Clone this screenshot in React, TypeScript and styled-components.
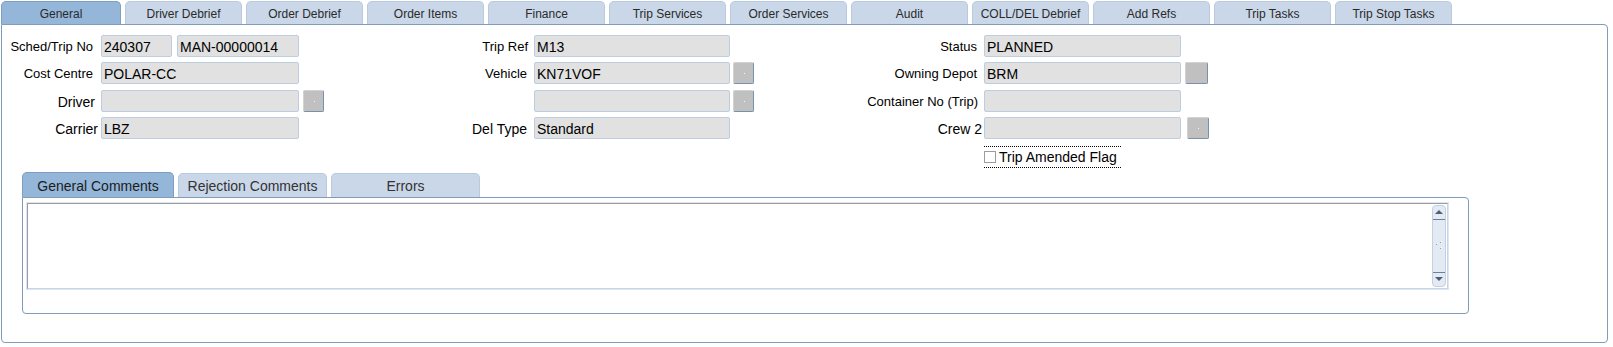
import React from "react";
import styled, { createGlobalStyle } from "styled-components";

const GlobalStyle = createGlobalStyle`
  html, body {
    margin: 0;
    padding: 0;
    background: #fff;
  }
  body {
    font-family: "Liberation Sans", Arial, sans-serif;
    color: #000;
  }
`;

const Page = styled.div`
  width: 1613px;
  box-sizing: border-box;
  padding: 1px 5px 0 1px;
`;

const TabBar = styled.div`
  display: flex;
  align-items: flex-end;
  gap: 4px;
  height: 23px;
`;

const MainTab = styled.div<{ $active?: boolean; $w: number }>`
  box-sizing: border-box;
  width: ${(p) => p.$w}px;
  height: 23px;
  display: flex;
  align-items: center;
  justify-content: center;
  padding-top: 1px;
  font-size: 12px;
  color: #2a2a2a;
  background: ${(p) => (p.$active ? "#93b6d9" : "#c9d7e9")};
  border: 1px solid ${(p) => (p.$active ? "#7f9fc2" : "#b9cadf")};
  border-bottom: none;
  border-radius: 5px 5px 0 0;
`;

const Panel = styled.div`
  box-sizing: border-box;
  height: 319px;
  border: 1px solid #7f9db9;
  border-radius: 0 4px 4px 4px;
  background: #fff;
`;

const Form = styled.div`
  display: grid;
  grid-template-columns: 99px 224px 209px 221px 229px 226px;
  grid-auto-rows: 22px;
  row-gap: 5.4px;
  padding-top: 10px;
`;

const Label = styled.div<{ $pad?: number; $big?: boolean }>`
  display: flex;
  align-items: center;
  justify-content: flex-end;
  padding-right: ${(p) => p.$pad ?? 6}px;
  padding-top: ${(p) => (p.$big ? 2 : 1)}px;
  font-size: ${(p) => (p.$big ? 14 : 13)}px;
  white-space: nowrap;
`;

const Cell = styled.div<{ $gap?: number }>`
  display: flex;
  align-items: center;
  gap: ${(p) => p.$gap ?? 4}px;
`;

const Field = styled.div<{ $w: number }>`
  box-sizing: border-box;
  width: ${(p) => p.$w}px;
  height: 22px;
  padding: 3px 0 0 2px;
  line-height: 17px;
  font-size: 14px;
  background: #e1e1e1;
  border: 1px solid #bccde2;
  border-radius: 2px;
  white-space: nowrap;
  overflow: hidden;
`;

const LovButton = styled.div<{ $w?: number; $dot?: boolean }>`
  box-sizing: border-box;
  position: relative;
  width: ${(p) => p.$w ?? 21}px;
  height: 22px;
  background: #c0c0c0;
  border: 1px solid;
  border-color: #d2d2d2 #7891ad #7891ad #d2d2d2;
  border-radius: 2px;
  &::after {
    content: "";
    display: ${(p) => (p.$dot ? "block" : "none")};
    position: absolute;
    left: 50%;
    top: 50%;
    width: 1px;
    height: 1px;
    background: #f4f4f4;
  }
`;

const CheckRow = styled.div`
  grid-column: 6;
  box-sizing: border-box;
  display: flex;
  align-items: center;
  gap: 3px;
  width: 137px;
  height: 22px;
  margin-top: 1px;
  border-top: 1px dotted #000;
  border-bottom: 1px dotted #000;
  font-size: 14px;
  white-space: nowrap;
`;

const CheckBox = styled.span`
  box-sizing: border-box;
  width: 12px;
  height: 12px;
  border: 1px solid #9c9c9c;
  background: #fff;
`;

const Comments = styled.div`
  width: 1447px;
  margin: 5px 0 0 20px;
`;

const SubTabBar = styled.div`
  display: flex;
  align-items: flex-end;
  gap: 4px;
  height: 25px;
`;

const SubTab = styled.div<{ $active?: boolean; $w: number }>`
  box-sizing: border-box;
  width: ${(p) => p.$w}px;
  height: ${(p) => (p.$active ? 25 : 24)}px;
  display: flex;
  align-items: center;
  justify-content: center;
  padding-top: 2px;
  font-size: 14px;
  color: ${(p) => (p.$active ? "#1c1c1c" : "#333")};
  background: ${(p) => (p.$active ? "#93b6d9" : "#c9d7e9")};
  border: 1px solid ${(p) => (p.$active ? "#7f9fc2" : "#b9cadf")};
  border-bottom: none;
  border-radius: 5px 5px 0 0;
`;

const SubPanel = styled.div`
  box-sizing: border-box;
  height: 117px;
  padding: 5px 0 0 4px;
  border: 1px solid #7f9db9;
  border-radius: 0 4px 4px 4px;
`;

const TextBox = styled.div`
  box-sizing: border-box;
  display: flex;
  width: 1421px;
  height: 86px;
  background: #fff;
  border: 1px solid;
  border-color: #9d9d9d #c8d5e6 #c8d5e6 #9d9d9d;
  box-shadow: 0 0 0 1px #dde6f0;
`;

const ScrollBar = styled.div`
  box-sizing: border-box;
  display: flex;
  flex-direction: column;
  width: 14px;
  margin: 1px 1px 1px auto;
  background: #e4eaf3;
  border: 1px solid #c2d0e2;
  border-radius: 4px;
`;

const ScrollEnd = styled.div<{ $down?: boolean }>`
  display: flex;
  align-items: center;
  justify-content: center;
  height: 13px;
  ${(p) =>
    p.$down ? "border-top: 1px solid #6f8199;" : "border-bottom: 1px solid #6f8199;"}
`;

const Arrow = styled.span<{ $down?: boolean }>`
  width: 0;
  height: 0;
  border-left: 4px solid transparent;
  border-right: 4px solid transparent;
  ${(p) =>
    p.$down ? "border-top: 4px solid #4f5e73;" : "border-bottom: 4px solid #4f5e73;"}
`;

const ScrollTrack = styled.div`
  flex: 1;
  display: flex;
  align-items: center;
  justify-content: center;
`;

const Grip = () => (
  <svg width="8" height="10" viewBox="0 0 8 10">
    <rect x="5" y="1" width="1" height="1" fill="#8ea3bd" />
    <rect x="6" y="0" width="1" height="1" fill="#fff" />
    <rect x="1" y="3" width="1" height="1" fill="#8ea3bd" />
    <rect x="2" y="2" width="1" height="1" fill="#fff" />
    <rect x="5" y="7" width="1" height="1" fill="#8ea3bd" />
    <rect x="6" y="6" width="1" height="1" fill="#fff" />
  </svg>
);

const mainTabs = [
  "General",
  "Driver Debrief",
  "Order Debrief",
  "Order Items",
  "Finance",
  "Trip Services",
  "Order Services",
  "Audit",
  "COLL/DEL Debrief",
  "Add Refs",
  "Trip Tasks",
  "Trip Stop Tasks",
];

export default function App() {
  return (
    <>
      <GlobalStyle />
      <Page>
        <TabBar>
          {mainTabs.map((t, i) => (
            <MainTab key={t} $active={i === 0} $w={i === 0 ? 120 : 117}>
              {t}
            </MainTab>
          ))}
        </TabBar>
        <Panel>
          <Form>
            <Label $pad={8}>Sched/Trip No</Label>
            <Cell $gap={5}>
              <Field $w={71}>240307</Field>
              <Field $w={122}>MAN-00000014</Field>
            </Cell>
            <Label $pad={6}>Trip Ref</Label>
            <Cell>
              <Field $w={196}>M13</Field>
            </Cell>
            <Label $pad={7}>Status</Label>
            <Cell>
              <Field $w={197}>PLANNED</Field>
            </Cell>

            <Label $pad={8}>Cost Centre</Label>
            <Cell>
              <Field $w={198}>POLAR-CC</Field>
            </Cell>
            <Label $pad={7}>Vehicle</Label>
            <Cell $gap={3}>
              <Field $w={196}>KN71VOF</Field>
              <LovButton $dot />
            </Cell>
            <Label $pad={7}>Owning Depot</Label>
            <Cell $gap={4}>
              <Field $w={197}>BRM</Field>
              <LovButton $w={23} />
            </Cell>

            <Label $pad={6} $big>
              Driver
            </Label>
            <Cell $gap={4}>
              <Field $w={198} />
              <LovButton $dot />
            </Cell>
            <Label />
            <Cell $gap={3}>
              <Field $w={196} />
              <LovButton $dot />
            </Cell>
            <Label $pad={6}>Container No (Trip)</Label>
            <Cell>
              <Field $w={197} />
            </Cell>

            <Label $pad={3} $big>
              Carrier
            </Label>
            <Cell>
              <Field $w={198}>LBZ</Field>
            </Cell>
            <Label $pad={7} $big>
              Del Type
            </Label>
            <Cell>
              <Field $w={196}>Standard</Field>
            </Cell>
            <Label $pad={2} $big>
              Crew 2
            </Label>
            <Cell $gap={6}>
              <Field $w={197} />
              <LovButton $w={22} $dot />
            </Cell>

            <CheckRow>
              <CheckBox />
              Trip Amended Flag
            </CheckRow>
          </Form>

          <Comments>
            <SubTabBar>
              <SubTab $active $w={152}>
                General Comments
              </SubTab>
              <SubTab $w={149}>Rejection Comments</SubTab>
              <SubTab $w={149}>Errors</SubTab>
            </SubTabBar>
            <SubPanel>
              <TextBox>
                <ScrollBar>
                  <ScrollEnd>
                    <Arrow />
                  </ScrollEnd>
                  <ScrollTrack>
                    <Grip />
                  </ScrollTrack>
                  <ScrollEnd $down>
                    <Arrow $down />
                  </ScrollEnd>
                </ScrollBar>
              </TextBox>
            </SubPanel>
          </Comments>
        </Panel>
      </Page>
    </>
  );
}
